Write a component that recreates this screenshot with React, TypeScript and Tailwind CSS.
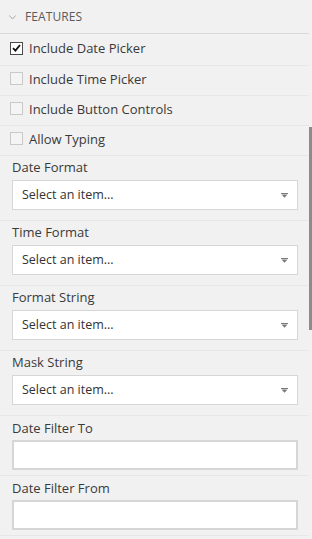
import { useState } from "react";

const checks = [
  { label: "Include Date Picker", on: true },
  { label: "Include Time Picker", on: false },
  { label: "Include Button Controls", on: false },
  { label: "Allow Typing", on: false },
];

const selects = ["Date Format", "Time Format", "Format String", "Mask String"];
const inputs = ["Date Filter To", "Date Filter From"];

function Caret() {
  return (
    <svg width="7" height="5" viewBox="0 0 7 5" className="shrink-0">
      <path d="M0 0h7v1H0z M0.5 1.5h6L3.5 4.8z" fill="#7a7a7a" />
    </svg>
  );
}

function CheckRow({ label, on, first }: { label: string; on: boolean; first?: boolean }) {
  const [checked, setChecked] = useState(on);
  return (
    <label
      className={`flex items-center gap-[6px] pl-[10px] pb-[4px] border-b border-[#e7e7e7] cursor-pointer ${
        first ? "h-[32px] pt-[1px]" : "h-[30px]"
      }`}
    >
      <span
        className={`w-[13px] h-[13px] flex items-center justify-center border ${
          checked ? "border-[#4a4a4a] bg-white" : "border-[#c9c9c9] bg-[#f4f4f4]"
        }`}
        onClick={() => setChecked(!checked)}
      >
        {checked && (
          <svg width="9" height="8" viewBox="0 0 9 8">
            <path d="M1 4.2l2.4 2.4L8 1" stroke="#111" strokeWidth="1.8" fill="none" />
          </svg>
        )}
      </span>
      <span className="text-[13px] leading-[18px] text-[#3a3a3a]">{label}</span>
    </label>
  );
}

export default function App() {
  return (
    <div
      className="w-[312px] h-[539px] overflow-hidden flex bg-[#f1f1f1]"
      style={{ fontFamily: "'Open Sans', 'Liberation Sans', sans-serif" }}
    >
      <div className="w-[309px] flex flex-col">
        {/* Section header */}
        <div className="h-[34px] flex items-center gap-[9px] pl-[9px] pt-[1px] border-b border-[#d9d9d9]">
          <svg width="7" height="5" viewBox="0 0 7 5">
            <path d="M0.3 0.5L3.5 4L6.7 0.5" stroke="#a0a0a0" strokeWidth="0.9" fill="none" />
          </svg>
          <span className="text-[12px] leading-[16px] text-[#5a5a5a] tracking-[0.1px]">FEATURES</span>
        </div>

        {checks.map((c, i) => (
          <CheckRow key={c.label} label={c.label} on={c.on} first={i === 0} />
        ))}

        {selects.map((s) => (
          <div key={s} className="pl-[12px] pr-[11px] pt-[2px] pb-[10px] border-b border-[#e7e7e7]">
            <div className="text-[13px] leading-[18px] text-[#3a3a3a] mb-[4px]">{s}</div>
            <div className="h-[30px] bg-white border border-[#d6d6d6] flex items-center justify-between pl-[9px] pr-[9px]">
              <span className="text-[12.5px] text-[#333]">Select an item...</span>
              <Caret />
            </div>
          </div>
        ))}

        {inputs.map((s) => (
          <div key={s} className="pl-[12px] pr-[11px] pt-[3px] pb-[5px] border-b border-[#e7e7e7]">
            <div className="text-[13px] leading-[18px] text-[#3a3a3a] mb-[3px]">{s}</div>
            <input className="block w-full h-[30px] bg-white border-2 border-[#d6d6d6] outline-none px-2 text-[13px]" />
          </div>
        ))}
      </div>

      {/* Scrollbar */}
      <div className="w-[3px] pt-[127px]">
        <div className="h-[203px] bg-[#8c8c8c]" />
      </div>
    </div>
  );
}
